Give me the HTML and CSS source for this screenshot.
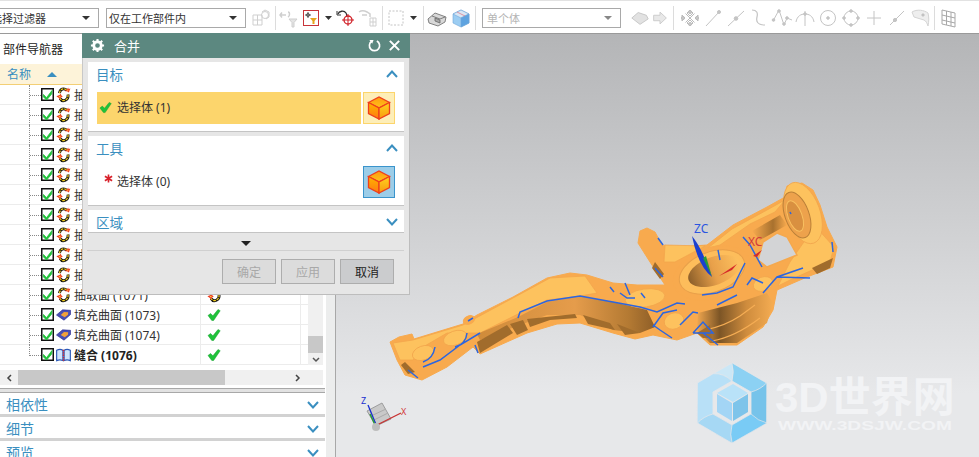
FILE: index.html
```html
<!DOCTYPE html>
<html lang="zh-CN">
<head>
    <meta charset="UTF-8">
    <title>合并</title>
    <link rel="stylesheet" href="styles.css">
</head>
<body>
    <svg class="defs" width="0" height="0">
        <symbol id="i-check" viewBox="0 0 13 13">
            <rect x="0.75" y="0.75" width="11.5" height="11.5" fill="#fff" stroke="#111" stroke-width="1.5"/>
            <path d="M2.5 6.5l3 3.2 5.5-7.2-.4 3.6-5 6-3.400-3.400z" fill="#1fc23a" stroke="#1fc23a" stroke-width=".8"/>
        </symbol>
        <symbol id="i-tick" viewBox="0 0 14 14">
            <path d="M1 7.5l2.6-2 2.3 2.3L11 1.5l2.2 1.2-6.6 9.8h-1.8z" fill="#1fc23a" stroke="#17a02e" stroke-width=".5"/>
        </symbol>
        <symbol id="i-extract" viewBox="0 0 16 18">
            <path d="M11.500 3.500C8.500 .8 4 2 3.500 7M13 8.500c1.200 6-6 9.500-8.800 4.500" fill="none" stroke="#111" stroke-width="3.200"/>
            <path d="M11.500 3.500C8.500 .8 4 2 3.500 7M13 8.500c1.200 6-6 9.500-8.800 4.500" fill="none" stroke="#f6d21f" stroke-width="1.400" stroke-dasharray="3 1"/>
            <path d="M0 10.500l3.500-1.400 1.500-1.600.6 2 1.600.8-2.200 1.800-1.200 2-1-1.800zM9.500 4.500l2.500-2 1.200-2 .6 1.700 2-.5-1 2.200-.7 2.300-1.700-1.200z" fill="#ee3a20"/>
            <path d="M2.500 10.500l2-.6.300 1-1 1zM12 3.500l1.300-.7.200 1.300-.8.500z" fill="#fbd13a"/>
        </symbol>
        <symbol id="i-fill" viewBox="0 0 16 14">
            <path d="M0.500 7L7 1.500l8.500.5v4.500L8.500 12.500z" fill="#4a4fb5" stroke="#2f3290" stroke-width=".7"/>
            <path d="M5 7l3.500-3.200 4.500.3-.2 2.500-3.500 2.700z" fill="#f2a23a"/>
        </symbol>
        <symbol id="i-seam" viewBox="0 0 16 14">
            <path d="M.7 2C3 .8 5.500.8 7.300 2v11c-1.800-1-4.300-1-6.600 0zM8.700 2c1.800-1.200 4.300-1.200 6.600 0v11c-2.300-1-4.800-1-6.600 0z" fill="#cfe4fa" stroke="#2a58b8" stroke-width="1.200"/>
            <path d="M8 1.500v11.500" stroke="#e02626" stroke-width="1.500" stroke-dasharray="1.500 1"/>
        </symbol>
        <symbol id="i-cube" viewBox="0 0 24 24">
            <defs>
                <linearGradient id="cube-top" x1="0" y1="0" x2="0" y2="1"><stop offset="0" stop-color="#ff9a10"/><stop offset="1" stop-color="#ffc21a"/></linearGradient>
                <linearGradient id="cube-left" x1="0" y1="0" x2="0" y2="1"><stop offset="0" stop-color="#ffb400"/><stop offset="1" stop-color="#ff7a10"/></linearGradient>
                <linearGradient id="cube-right" x1="0" y1="0" x2="0" y2="1"><stop offset="0" stop-color="#ffd21e"/><stop offset="1" stop-color="#f89a10"/></linearGradient>
            </defs>
            <path d="M1.500 6.500L12 1l10.500 5.500L12 12z" fill="url(#cube-top)" stroke="#ee3f1c" stroke-width="1.300"/>
            <path d="M1.500 6.500L12 12v11L1.500 17.500z" fill="url(#cube-left)" stroke="#ee3f1c" stroke-width="1.300"/>
            <path d="M22.500 6.500L12 12v11l10.500-5.500z" fill="url(#cube-right)" stroke="#ee3f1c" stroke-width="1.300"/>
        </symbol>
        <symbol id="i-chev-down" viewBox="0 0 12 8">
            <path d="M1 1l5 5.500L11 1" fill="none" stroke="#3a8fc0" stroke-width="2"/>
        </symbol>
        <symbol id="i-chev-up" viewBox="0 0 12 8">
            <path d="M1 7l5-5.500L11 7" fill="none" stroke="#3a8fc0" stroke-width="2"/>
        </symbol>
    </svg>

    <div class="toolbar">
        <div class="combo combo-filter"><span>选择过滤器</span><i class="combo-arrow"></i></div>
        <div class="combo combo-scope"><span>仅在工作部件内</span><i class="combo-arrow"></i></div>

        <div class="tool-group first-group">
            <svg class="tool" viewBox="0 0 22 22" fill="none" stroke="#cfcfcf"><path d="M3 8h9v10H3zM3 13h9M7.500 8v10"/><circle cx="15" cy="8" r="3.500"/><path d="M12 5l3-2 4 2v5l-3 2"/></svg>
        </div>
        <i class="sep"></i>
        <div class="tool-group">
            <svg class="tool" viewBox="0 0 22 22" fill="none" stroke="#cfcfcf" stroke-width="1.500"><path d="M2 8h6M4 5.500L2 8l2 2.500M10 5c2 0 2 4 0 5"/><path d="M11 12h8l-3 3.500V20h-2v-4.500z" stroke-width="1" fill="#e4e4e4"/></svg>
            <svg class="tool" viewBox="0 0 22 22" fill="none"><rect x="3.500" y="3.500" width="15" height="15" stroke="#c8343a"/><path d="M8 5v6M5 8h6" stroke="#555"/><circle cx="8" cy="8" r="1.500" stroke="#555"/><path d="M10 11h7l-2.500 3v3h-2v-3z" fill="#e8a41c"/></svg>
            <i class="caret"></i>
            <svg class="tool" viewBox="0 0 22 22" fill="none"><path d="M3 7c1-3 6-4 8-1 .6 1 .8 2 .8 3" stroke="#333" stroke-width="1.300"/><path d="M2 4v4h4" stroke="#333"/><circle cx="13" cy="13" r="4" stroke="#d01f26" stroke-width="1.300"/><path d="M13 7v12M7 13h12" stroke="#d01f26"/></svg>
            <svg class="tool" viewBox="0 0 22 22" fill="none" stroke="#cfcfcf"><path d="M2 5c3-2 6-1 8 0l3 2v3M5 8h5" stroke-width="1.500"/><path d="M13 11h6v8h-6zM16 11v8M13 15h6"/></svg>
        </div>
        <i class="sep"></i>
        <div class="tool-group">
            <svg class="tool" viewBox="0 0 22 22" fill="none" stroke="#c4c4c4" stroke-dasharray="2 1.500"><rect x="4" y="4" width="14" height="14"/></svg>
            <i class="caret"></i>
        </div>
        <i class="sep"></i>
        <div class="tool-group pair">
            <svg class="tool" viewBox="0 0 22 22" stroke="#666" stroke-width=".8"><path d="M2 12l7-6 11 4-1 5-7 4-9-3z" fill="#d8d8d8"/><path d="M6 9l8 3 5-2" fill="none"/><path d="M9 11l5 2v3l-5-2z" fill="#a8a8a8"/></svg>
            <svg class="tool" viewBox="0 0 22 22" stroke="#6fa6d8" stroke-width=".6"><path d="M11 3l8 4v9l-8 4-8-4V7z" fill="#9ccdf2"/><path d="M3 7l8 4 8-4-8-4z" fill="#d8e6f4"/><path d="M11 11v9l8-4V7z" fill="#5ea3e0"/><path d="M7 5l8 4" stroke="#e05a6a"/></svg>
        </div>
        <i class="sep"></i>
        <div class="combo combo-body"><span>单个体</span><i class="combo-arrow"></i></div>

        <div class="tool-group narrow-group">
            <svg class="tool" viewBox="0 0 22 22" fill="#e2e2e2" stroke="#c4c4c4"><path d="M2 11l7-6 9 3 2 4-9 6z"/></svg>
            <svg class="tool" viewBox="0 0 22 22" fill="#e8e8e8" stroke="#cacaca"><path d="M4 8h7V4.500L18 11l-7 6.500V14H4z"/></svg>
        </div>
        <i class="sep"></i>
        <div class="tool-group snap-group">
            <svg class="tool" viewBox="0 0 22 22" fill="#ccc" stroke="#bbb"><path d="M11 3l3 3-3 3-3-3zM11 13l3 3-3 3-3-3zM3 8l3 3-3 3zM19 8l-3 3 3 3zM6.500 6.500l9 9M15.500 6.500l-9 9" fill="none"/><circle cx="11" cy="5" r="1.500"/><circle cx="11" cy="17" r="1.500"/><circle cx="4" cy="11" r="1.500"/><circle cx="18" cy="11" r="1.500"/></svg>
            <svg class="tool" viewBox="0 0 22 22" stroke="#c4c4c4" fill="#c4c4c4"><path d="M4 19L17 5"/><circle cx="17" cy="5" r="1.500"/></svg>
            <svg class="tool" viewBox="0 0 22 22" stroke="#c4c4c4" fill="#c4c4c4"><path d="M3 19L19 4"/><circle cx="11" cy="11.500" r="1.800"/></svg>
            <svg class="tool" viewBox="0 0 22 22" stroke="#c4c4c4" fill="none" stroke-width="1.200"><path d="M4 3c5 0 6 3 5 7s0 8 8 8"/></svg>
            <svg class="tool" viewBox="0 0 22 22" stroke="#c4c4c4" fill="#c4c4c4"><path d="M2 14L8 3l5 15 3-7 5 2" fill="none"/><circle cx="2.500" cy="13" r="1.300"/><circle cx="8" cy="4" r="1.300"/><circle cx="13" cy="17" r="1.300"/><circle cx="16" cy="11" r="1.300"/></svg>
            <svg class="tool" viewBox="0 0 22 22" stroke="#c4c4c4" fill="none"><path d="M11 4v15M2 15c1-6 5-8 9-8s8 2 9 8"/><circle cx="11" cy="7" r="1.300" fill="#c4c4c4"/></svg>
            <svg class="tool" viewBox="0 0 22 22" stroke="#c4c4c4" fill="none"><circle cx="11" cy="11" r="7.500"/><circle cx="11" cy="11" r="1.300" fill="#c4c4c4"/></svg>
            <svg class="tool" viewBox="0 0 22 22" stroke="#c4c4c4" fill="#c4c4c4"><circle cx="11" cy="11" r="7" fill="none"/><circle cx="11" cy="4" r="1.300"/><circle cx="11" cy="18" r="1.300"/><circle cx="4" cy="11" r="1.300"/><circle cx="18" cy="11" r="1.300"/></svg>
            <svg class="tool" viewBox="0 0 22 22" stroke="#c4c4c4"><path d="M11 4v14M4 11h14"/></svg>
            <svg class="tool" viewBox="0 0 22 22" stroke="#c4c4c4" fill="#c4c4c4"><path d="M4 18L18 4"/><circle cx="9" cy="13" r="1.600"/></svg>
            <svg class="tool" viewBox="0 0 22 22" stroke="#d4d4d4" fill="#eee"><path d="M3 5c5-3 12-2 16 1 1 4 1 8 0 13-1-3-2-5-4-6-3-1-7-2-10-3z"/><circle cx="14" cy="8" r="1.300" fill="#aaa"/></svg>
        </div>
        <i class="sep"></i>
        <svg class="tool" viewBox="0 0 22 22" fill="none" stroke="#a8a8a8"><path d="M5 3l13 3v14l-13-3zM5 8l13 3M5 13l13 3M9.500 4v14M14 5v14"/></svg>
    </div>

    <div class="main">
        <div class="side">
            <div class="nav-title">部件导航器</div>
            <div class="tree-head"><span>名称</span><i class="sort-arrow"></i></div>
            <div class="tree-body">
                <div class="tree-rows">
                    <div class="row"><div class="cell-name"><i class="stub"></i><svg class="ico-check"><use href="#i-check"/></svg><svg class="ico"><use href="#i-extract"/></svg><span>抽取面 (1051)</span></div><div class="cell-status"><svg class="ico"><use href="#i-extract"/></svg></div></div>
                    <div class="row"><div class="cell-name"><i class="stub"></i><svg class="ico-check"><use href="#i-check"/></svg><svg class="ico"><use href="#i-extract"/></svg><span>抽取面 (1053)</span></div><div class="cell-status"><svg class="ico"><use href="#i-extract"/></svg></div></div>
                    <div class="row"><div class="cell-name"><i class="stub"></i><svg class="ico-check"><use href="#i-check"/></svg><svg class="ico"><use href="#i-extract"/></svg><span>抽取面 (1055)</span></div><div class="cell-status"><svg class="ico"><use href="#i-extract"/></svg></div></div>
                    <div class="row"><div class="cell-name"><i class="stub"></i><svg class="ico-check"><use href="#i-check"/></svg><svg class="ico"><use href="#i-extract"/></svg><span>抽取面 (1057)</span></div><div class="cell-status"><svg class="ico"><use href="#i-extract"/></svg></div></div>
                    <div class="row"><div class="cell-name"><i class="stub"></i><svg class="ico-check"><use href="#i-check"/></svg><svg class="ico"><use href="#i-extract"/></svg><span>抽取面 (1059)</span></div><div class="cell-status"><svg class="ico"><use href="#i-extract"/></svg></div></div>
                    <div class="row"><div class="cell-name"><i class="stub"></i><svg class="ico-check"><use href="#i-check"/></svg><svg class="ico"><use href="#i-extract"/></svg><span>抽取面 (1061)</span></div><div class="cell-status"><svg class="ico"><use href="#i-extract"/></svg></div></div>
                    <div class="row"><div class="cell-name"><i class="stub"></i><svg class="ico-check"><use href="#i-check"/></svg><svg class="ico"><use href="#i-extract"/></svg><span>抽取面 (1063)</span></div><div class="cell-status"><svg class="ico"><use href="#i-extract"/></svg></div></div>
                    <div class="row"><div class="cell-name"><i class="stub"></i><svg class="ico-check"><use href="#i-check"/></svg><svg class="ico"><use href="#i-extract"/></svg><span>抽取面 (1065)</span></div><div class="cell-status"><svg class="ico"><use href="#i-extract"/></svg></div></div>
                    <div class="row"><div class="cell-name"><i class="stub"></i><svg class="ico-check"><use href="#i-check"/></svg><svg class="ico"><use href="#i-extract"/></svg><span>抽取面 (1067)</span></div><div class="cell-status"><svg class="ico"><use href="#i-extract"/></svg></div></div>
                    <div class="row"><div class="cell-name"><i class="stub"></i><svg class="ico-check"><use href="#i-check"/></svg><svg class="ico"><use href="#i-extract"/></svg><span>抽取面 (1069)</span></div><div class="cell-status"><svg class="ico"><use href="#i-extract"/></svg></div></div>
                    <div class="row"><div class="cell-name"><i class="stub"></i><svg class="ico-check"><use href="#i-check"/></svg><svg class="ico"><use href="#i-extract"/></svg><span>抽取面 (1071)</span></div><div class="cell-status"><svg class="ico"><use href="#i-extract"/></svg></div></div>
                    <div class="row"><div class="cell-name"><i class="stub"></i><svg class="ico-check"><use href="#i-check"/></svg><svg class="ico"><use href="#i-fill"/></svg><span>填充曲面 (1073)</span></div><div class="cell-status"><svg class="ico-tick"><use href="#i-tick"/></svg></div></div>
                    <div class="row"><div class="cell-name"><i class="stub"></i><svg class="ico-check"><use href="#i-check"/></svg><svg class="ico"><use href="#i-fill"/></svg><span>填充曲面 (1074)</span></div><div class="cell-status"><svg class="ico-tick"><use href="#i-tick"/></svg></div></div>
                    <div class="row"><div class="cell-name"><i class="stub stub-last"></i><svg class="ico-check"><use href="#i-check"/></svg><svg class="ico"><use href="#i-seam"/></svg><span class="row-bold">缝合 (1076)</span></div><div class="cell-status"><svg class="ico-tick"><use href="#i-tick"/></svg></div></div>
                </div>
                <div class="vscroll">
                    <div class="vthumb"></div>
                    <svg class="scroll-btn" viewBox="0 0 8 6"><path d="M1 1l3 3 3-3" fill="none" stroke="#555" stroke-width="1.500"/></svg>
                </div>
            </div>
            <div class="hscroll">
                <svg class="scroll-arrow" viewBox="0 0 6 8"><path d="M5 1L2 4l3 3" fill="none" stroke="#444" stroke-width="1.500"/></svg>
                <div class="hthumb"></div>
                <svg class="scroll-arrow" viewBox="0 0 6 8"><path d="M1 1l3 3-3 3" fill="none" stroke="#444" stroke-width="1.500"/></svg>
            </div>
            <div class="grip"></div>
            <div class="nav-section"><span>相依性</span><svg class="chev"><use href="#i-chev-down"/></svg></div>
            <div class="nav-section"><span>细节</span><svg class="chev"><use href="#i-chev-down"/></svg></div>
            <div class="nav-section"><span>预览</span><svg class="chev"><use href="#i-chev-down"/></svg></div>
        </div>

        <div class="viewport">
            <svg class="scene" width="643" height="423" viewBox="336 34 643 423">
                <defs>
                    <linearGradient id="side-face" x1="0" y1="0" x2="1" y2="0">
                        <stop offset="0" stop-color="#cf8b3a"/><stop offset=".55" stop-color="#e59c4b"/><stop offset=".85" stop-color="#b47a33"/><stop offset="1" stop-color="#8f5f28"/>
                    </linearGradient>
                    <linearGradient id="drum" x1="0" y1="0" x2="1" y2="0">
                        <stop offset="0" stop-color="#f0a64e"/><stop offset=".3" stop-color="#7c5526"/><stop offset=".65" stop-color="#cf8c3d"/><stop offset="1" stop-color="#f4ac52"/>
                    </linearGradient>
                    <linearGradient id="bore" x1="0" y1="0" x2="1" y2="0">
                        <stop offset="0" stop-color="#8c5f2a"/><stop offset=".5" stop-color="#e8a04a"/><stop offset="1" stop-color="#fdc05e"/>
                    </linearGradient>
                    <linearGradient id="strut" x1="0" y1="0" x2="1" y2="0">
                        <stop offset="0" stop-color="#f8aa4e"/><stop offset=".6" stop-color="#a8712e"/><stop offset="1" stop-color="#f8aa4e"/>
                    </linearGradient>
                </defs>

                <!-- part body -->
                <path class="part-base" d="M390 342L399 337 412 334 414 339 463 324 477 315 513 297 547 278 570 273 587 275 613 283 637 285 655 285 665 285 650 262 638 243 640 231 647 228 655 232 662 245 680 247 707 245 733 225 767 207 785 197 787 186 802 183 813 190 820 205 827 227 837 247 833 267 807 277 777 290 773 310 763 327 737 345 710 345 697 333 677 340 653 335 635 339 613 333 580 323 557 324 527 333 480 354 473 347 447 367 422 380 405 375 397 360z"/>
                <path class="part-light" d="M393 343L413 340 463 325 513 298 550 278 585 276 597 293 580 296 547 300 520 313 480 333 447 333 423 347 413 360 400 360z"/>
                <path d="M518 317L547 302 580 296 613 302 647 310 655 327 640 333 613 330 580 315 547 315 480 340 477 334z" fill="url(#side-face)"/>
                <path class="part-dark" d="M477 342L507 325 513 333 480 353zM510 324L523 320 528 330 517 335zM527 319L575 314 577 318 550 320 530 327zM583 315L610 323 615 330 588 324zM617 324L640 333 625 335zM405 362L415 372 408 374 401 365z"/>
                <ellipse class="part-light" cx="455" cy="338" rx="12" ry="7" transform="rotate(-20 455 338)"/>
                <ellipse class="part-light" cx="423" cy="353" rx="11" ry="7" transform="rotate(-20 423 353)"/>
                <ellipse class="part-base" cx="469" cy="320" rx="6" ry="4" transform="rotate(-25 469 320)"/>

                <path class="part-light" d="M665 245L705 246 675 262 664 262zM732 229L767 210 785 200 775 212 750 224 720 245 708 248zM815 226L834 247 830 262 790 280 778 286 790 262z"/>
                <path d="M752 231L780 215 787 225 760 240z" fill="url(#strut)"/>
                <path d="M763 242L777 233 787 237 797 255 767 267 758 260z" fill="#d3d4d6" stroke="#f5a84d" stroke-width="1.500"/>
                <ellipse class="part-light" cx="803" cy="213" rx="17" ry="32" transform="rotate(-20 803 213)"/>
                <ellipse cx="797" cy="215" rx="12" ry="24" transform="rotate(-20 797 215)" fill="#eda24c" stroke="#b97f38"/>
                <ellipse cx="795" cy="216" rx="7" ry="16" transform="rotate(-20 795 216)" fill="#d99040" stroke="#f8c060"/>
                <path class="part-dark" d="M812 268L833 258 830 268 817 274z"/>
                <path d="M698 313L737 303 767 293 773 303 767 323 737 343 710 343 697 330z" fill="url(#drum)"/>
                <path d="M705 330Q725 326 740 316L755 305M712 341Q735 337 760 318" fill="none" stroke="#f5ad54" stroke-width="1.200"/>
                <ellipse class="part-base" cx="712" cy="273" rx="40" ry="25" transform="rotate(-20 712 273)"/>
                <ellipse cx="712" cy="272" rx="34" ry="20" transform="rotate(-20 712 272)" fill="#fdbd5b" stroke="#e8a04a"/>
                <ellipse cx="714" cy="271" rx="27" ry="14" transform="rotate(-20 714 271)" fill="url(#bore)"/>
                <ellipse class="part-light" cx="763" cy="284" rx="10" ry="7" transform="rotate(-20 763 284)"/>
                <ellipse class="part-light" cx="674" cy="321" rx="10" ry="8" transform="rotate(-20 674 321)"/>
                <ellipse class="part-light" cx="645" cy="298" rx="20" ry="9" transform="rotate(-8 645 298)"/>
                <path class="part-dark" d="M655 262L664 274 660 279 652 268zM697 333L710 325 712 338 703 338z"/>

                <!-- edge curves -->
                <g class="edges">
                    <path d="M518 318L520 312 547 301 580 296 613 302 640 307 657 312 677 303 685 304"/>
                    <path d="M423 367L440 360 460 345 480 333M423 362Q433 359 435 347M455 347Q466 344 467 333M468 321L473 318M475 345L478 353M408 370L418 378"/>
                    <path d="M610 287L614 292M620 293L627 298 635 298M625 283L630 295M641 293L645 298"/>
                    <path d="M653 327L663 313 677 310M653 325L660 330 672 338M680 325L693 312 698 313"/>
                    <path d="M702 295L717 293 733 287 745 263M717 305L737 295M747 285L752 278 763 283M763 293L777 277 803 268M777 277L810 278"/>
                    <path d="M693 333L703 322 713 333 693 333M703 333L718 345"/>
                    <path d="M743 237L750 245 762 267M718 250L720 260M655 268L663 277M658 238L663 245M832 242L833 252M790 212L791 214"/>
                </g>

                <!-- work triad -->
                <path d="M692 236Q702 248 712 277 698 266 692 236z" fill="#1a3fd0"/>
                <path d="M712 277L703 258 706 256z" fill="#2a9a3a"/>
                <path d="M719 276L737 264 732 270z" fill="#d62a2a"/>
                <path d="M753 256L762 250 757 257z" fill="#d62a2a"/>
                <text class="axis-label axis-blue" x="694" y="233">ZC</text>
                <text class="axis-label axis-red" x="748" y="246">XC</text>

                <!-- orientation triad -->
                <path d="M367 411L382 403 391 419 376 426z" fill="#c9c9c9" stroke="#9d9d9d"/>
                <path d="M371 416L386 409M374 420L388 413" stroke="#aaa" fill="none"/>
                <path d="M377 427L368 405" stroke="#1a2fd0" stroke-width="1.300"/>
                <path d="M376 427L370 414" stroke="#2a9a3a" stroke-width="1.500"/>
                <path d="M377 425L401 413" stroke="#c83030" stroke-width="1.300"/>
                <circle cx="376" cy="427" r="4" fill="#bdbdbd"/>
                <text class="mini-label mini-blue" x="361" y="404">Z</text>
                <text class="mini-label mini-red" x="401" y="415">X</text>

                <!-- watermark -->
                <g transform="translate(732 403)" stroke="#e6e7e9" stroke-width=".7">
                    <path d="M-35-20L0-40 16-31Q22-22 19-11L0-22-19-11Q-26-18-35-20z" fill="#cbe7f6"/>
                    <path d="M-35-20L0-40 16-31Q22-22 19-11L0-22-19-11Q-26-18-35-20z" transform="rotate(60)" fill="#8cd1f3"/>
                    <path d="M-35-20L0-40 16-31Q22-22 19-11L0-22-19-11Q-26-18-35-20z" transform="rotate(120)" fill="#76c3ea"/>
                    <path d="M-35-20L0-40 16-31Q22-22 19-11L0-22-19-11Q-26-18-35-20z" transform="rotate(180)" fill="#79cbf5"/>
                    <path d="M-35-20L0-40 16-31Q22-22 19-11L0-22-19-11Q-26-18-35-20z" transform="rotate(240)" fill="#a6d8f4"/>
                    <path d="M-35-20L0-40 16-31Q22-22 19-11L0-22-19-11Q-26-18-35-20z" transform="rotate(300)" fill="#b8e0f7"/>
                    <path d="M1-19L16-10 1-1-15-10z" fill="#b9e2f8" stroke="none"/>
                    <path d="M-15-9L0 0V18L-15 9z" fill="#a3d5f5" stroke="none"/>
                    <path d="M16-9L1 0V18L16 9z" fill="#7ec4ea" stroke="none"/>
                </g>
                <text class="wm-title" x="775" y="412">3D世界网</text>
                <text class="wm-url" x="778" y="430" textLength="174" lengthAdjust="spacingAndGlyphs">WWW.3DSJW.COM</text>
            </svg>
        </div>
    </div>

    <div class="dialog">
        <div class="dialog-title">
            <svg class="gear" viewBox="0 0 16 16"><circle cx="8" cy="8" r="4" fill="none" stroke="#fff" stroke-width="3"/><path d="M8 1v3M8 12v3M1 8h3M12 8h3M3 3l2 2M11 11l2 2M13 3l-2 2M5 11l-2 2" stroke="#fff" stroke-width="2.200"/></svg>
            <span class="dialog-name">合并</span>
            <svg class="title-btn" viewBox="0 0 14 14"><path d="M4 2.500A5.500 5.500 0 1 0 9.500 2.200" fill="none" stroke="#fff" stroke-width="1.800"/><path d="M1.500 1l4.500 .2-1.500 4z" fill="#fff"/></svg>
            <svg class="title-btn" viewBox="0 0 14 14"><path d="M2 2l10 10M12 2L2 12" stroke="#fff" stroke-width="2.200"/></svg>
        </div>
        <div class="dialog-body">
            <section class="panel panel-target">
                <div class="panel-head"><span>目标</span><svg class="chev"><use href="#i-chev-up"/></svg></div>
                <div class="pick-row">
                    <div class="pick-label pick-active"><svg class="pick-mark"><use href="#i-tick"/></svg><span>选择体 (1)</span></div>
                    <div class="pick-btn pick-btn-yellow"><svg class="pick-cube"><use href="#i-cube"/></svg></div>
                </div>
            </section>
            <section class="panel panel-tool">
                <div class="panel-head"><span>工具</span><svg class="chev"><use href="#i-chev-up"/></svg></div>
                <div class="pick-row">
                    <div class="pick-label">
                        <svg class="star" viewBox="0 0 10 10"><path d="M5 .5v9M1 2.500l8 5M9 2.500l-8 5" stroke="#d8202a" stroke-width="1.800"/></svg>
                        <span>选择体 (0)</span>
                    </div>
                    <div class="pick-btn pick-btn-blue"><svg class="pick-cube"><use href="#i-cube"/></svg></div>
                </div>
            </section>
            <section class="panel panel-region">
                <div class="panel-head"><span>区域</span><svg class="chev"><use href="#i-chev-down"/></svg></div>
            </section>
            <div class="more"><i class="more-arrow"></i></div>
            <div class="dialog-actions">
                <button class="btn" disabled>确定</button>
                <button class="btn" disabled>应用</button>
                <button class="btn btn-cancel">取消</button>
            </div>
        </div>
    </div>
</body>
</html>
```

FILE: styles.css
```css
* {
    box-sizing: border-box;
}

html, body {
    margin: 0;
    height: 457px;
    overflow: hidden;
}

body {
    position: relative;
    font-family: "Noto Sans", "Noto Sans CJK SC", sans-serif;
    font-size: 12px;
    color: #333;
    background-color: #fff;
}

.defs {
    display: block;
    height: 0;
}

i {
    display: block;
    font-style: normal;
}

/* top toolbar */
.toolbar {
    display: flex;
    align-items: center;
    height: 34px;
    padding-top: 2px;
    background-color: #fff;
    border-top: 1px solid #e2e2e2;
    border-bottom: 1px solid #9a9a9a;
}

.combo {
    display: flex;
    align-items: center;
    justify-content: space-between;
    flex-shrink: 0;
    height: 20px;
    padding: 0 8px 0 2px;
    font-size: 11px;
    background-color: #fff;
    border: 1px solid #a9a9a9;
}

.combo-filter {
    width: 120px;
    margin-left: -21px;
    padding-left: 11px;
}

.combo-scope {
    width: 140px;
    margin-left: 7px;
}

.combo-body {
    width: 139px;
    margin-left: 4px;
    padding-left: 4px;
    color: #b5b5b5;
}

.combo-arrow {
    width: 0;
    height: 0;
    border-left: 4px solid transparent;
    border-right: 4px solid transparent;
    border-top: 4px solid #333;
}

.combo-body .combo-arrow {
    border-top-color: #888;
}

.tool-group {
    display: flex;
    align-items: center;
}

.first-group {
    margin-left: 4px;
}

.narrow-group {
    margin-left: 9px;
}

.narrow-group .tool {
    width: 20px;
}

.snap-group {
    margin-left: 3px;
    gap: 1px;
}

.pair {
    gap: 2px;
}

.tool {
    display: block;
    flex-shrink: 0;
    width: 22px;
    height: 22px;
}

.caret {
    width: 13px;
    height: 4px;
    background-color: #333;
    clip-path: polygon(3px 0, 10px 0, 6.5px 4px);
}

.sep {
    flex-shrink: 0;
    width: 1px;
    height: 24px;
    margin: 0 2px 0 3px;
    background-color: #dcdcdc;
}

/* main area */
.main {
    display: flex;
    height: 423px;
}

.side {
    flex-shrink: 0;
    width: 336px;
    padding-right: 10px;
    background: linear-gradient(to right, #fff 326px, #eceded 326px);
    border-right: 1px solid #a8a8a8;
    overflow: hidden;
}

.nav-title {
    height: 30px;
    padding: 6px 0 0 3px;
    color: #222;
}

.tree-head {
    display: flex;
    align-items: center;
    gap: 16px;
    height: 21px;
    padding-left: 7px;
    color: #3a8fc0;
    background-color: #fdf3d9;
    border-bottom: 1px solid #f3cf75;
}

.sort-arrow {
    width: 0;
    height: 0;
    border-left: 5px solid transparent;
    border-right: 5px solid transparent;
    border-bottom: 5px solid #3a8fc0;
}

.tree-body {
    display: flex;
    height: 280px;
    margin-right: 2px;
}

.tree-rows {
    width: 308px;
}

.row {
    display: flex;
    height: 20px;
    border-bottom: 1px solid #ececec;
}

.cell-name {
    display: flex;
    align-items: center;
    width: 201px;
    padding-left: 29px;
    white-space: nowrap;
    border-right: 1px solid #ececec;
}

.cell-status {
    display: flex;
    align-items: center;
    width: 100px;
    padding-left: 6px;
    border-right: 1px solid #ececec;
}

.stub {
    flex-shrink: 0;
    align-self: flex-start;
    width: 12px;
    height: 20px;
    border-left: 1px dotted #888;
}

.stub::after {
    content: "";
    display: block;
    height: 10px;
    border-bottom: 1px dotted #888;
}

.stub-last {
    height: 11px;
}

.ico-check {
    flex-shrink: 0;
    width: 13px;
    height: 13px;
    margin-right: 2px;
}

.ico {
    flex-shrink: 0;
    width: 15px;
    height: 16px;
    margin-right: 3px;
}

.ico-tick {
    flex-shrink: 0;
    width: 14px;
    height: 14px;
}

.row-bold {
    font-weight: 700;
    color: #222;
}

.vscroll {
    display: flex;
    flex-direction: column;
    justify-content: flex-end;
    width: 15px;
    background-color: #f0f0f0;
}

.vthumb {
    height: 17px;
    margin-bottom: 4px;
    background-color: #c8c8c8;
}

.scroll-btn {
    width: 8px;
    height: 6px;
    margin: 0 auto 2px;
}

.hscroll {
    display: flex;
    align-items: center;
    height: 15px;
    margin: 5px 2px 0 0;
    padding: 0 22px 0 6px;
    background-color: #f0f0f0;
}

.scroll-arrow {
    flex-shrink: 0;
    width: 6px;
    height: 8px;
}

.hthumb {
    width: 208px;
    height: 15px;
    margin: 0 70px 0 6px;
    background-color: #c8c8c8;
}

.grip {
    height: 5px;
    margin-top: 3px;
    background-color: #e2e2e2;
    border-top: 1px solid #a8a8a8;
    border-bottom: 1px solid #a8a8a8;
}

.nav-section {
    display: flex;
    align-items: center;
    justify-content: space-between;
    height: 24px;
    padding: 3px 6px 0;
    font-size: 14px;
    line-height: 18px;
    color: #3a8fc0;
    background-color: #fff;
    border-bottom: 3px solid #d2d2d2;
}

.chev {
    flex-shrink: 0;
    width: 12px;
    height: 8px;
}

/* 3D view */
.viewport {
    flex: 1;
    background: linear-gradient(#b4b5b7, #cfd0d2 45%, #e7e8ea 85%);
}

.scene {
    display: block;
}

.part-base {
    fill: #f8aa4e;
    stroke: #f8aa4e;
    stroke-linejoin: round;
}

.part-light {
    fill: #fdc25e;
    stroke: #f2a64d;
    stroke-width: 0.8;
}

.part-dark {
    fill: #a16c2c;
}

.edges path {
    fill: none;
    stroke: #2c66e0;
    stroke-width: 1.5;
}

.axis-label {
    font-family: "Noto Sans", sans-serif;
    font-size: 12px;
}

.axis-blue {
    fill: #2a55e0;
}

.axis-red {
    fill: #d23a3a;
}

.mini-label {
    font-family: "Noto Sans", sans-serif;
    font-size: 9px;
}

.mini-blue {
    fill: #1a2fd0;
}

.mini-red {
    fill: #d23a3a;
}

.wm-title {
    font-family: "Liberation Sans", "Noto Sans CJK SC", sans-serif;
    font-size: 42px;
    font-weight: 700;
    fill: #f2f3f5;
}

.wm-url {
    font-family: "Liberation Sans", sans-serif;
    font-size: 12px;
    font-weight: 700;
    fill: #f2f3f5;
}

/* dialog */
.dialog {
    position: absolute;
    left: 82px;
    top: 33px;
    width: 328px;
    height: 262px;
    background-color: #e6e6e6;
    border-right: 1px solid #bdbdbd;
    border-bottom: 1px solid #bdbdbd;
    border-left: 1px solid #c8c8c8;
}

.dialog-title {
    display: flex;
    align-items: center;
    height: 25px;
    margin: 0 -1px;
    padding: 0 9px 0 8px;
    color: #fff;
    background-color: #5c8880;
}

.gear {
    width: 15px;
    height: 15px;
}

.dialog-name {
    flex: 1;
    margin-left: 9px;
    font-size: 13px;
}

.title-btn {
    width: 13px;
    height: 13px;
    margin-left: 7px;
}

.dialog-body {
    padding: 4px 5px 0;
}

.panel {
    background-color: #fff;
    border-bottom: 1px solid #c4c4c4;
    margin-bottom: 4px;
}

.panel-target,
.panel-tool {
    height: 70px;
}

.panel-region {
    height: 23px;
    margin-bottom: 0;
}

.panel-head {
    display: flex;
    align-items: center;
    justify-content: space-between;
    height: 26px;
    padding: 0 6px 2px 8px;
    font-size: 13.5px;
    color: #3a8fc0;
}

.panel-region .panel-head {
    height: 23px;
    padding-top: 3px;
}

.pick-row {
    display: flex;
    gap: 2px;
    padding: 4px 9px 0;
}

.pick-label {
    display: flex;
    align-items: center;
    width: 264px;
    height: 32px;
    padding: 0 0 2px 2px;
    color: #333;
}

.pick-active {
    background-color: #fcd56c;
}

.pick-mark {
    width: 13px;
    height: 13px;
    margin-right: 5px;
}

.star {
    flex-shrink: 0;
    width: 9px;
    height: 9px;
    margin: -5px 4px 0 5px;
}

.pick-btn {
    display: flex;
    align-items: center;
    justify-content: center;
    width: 32px;
    height: 32px;
    border: 1px solid;
}

.pick-btn-yellow {
    background-color: #fdeeb8;
    border-color: #fcd56c;
}

.pick-btn-blue {
    background-color: #9ccde8;
    border-color: #3a94cc;
}

.pick-cube {
    width: 24px;
    height: 24px;
}

.more {
    display: flex;
    justify-content: center;
    align-items: center;
    height: 18px;
    margin-left: -1px;
    padding-top: 3px;
    border-bottom: 1px solid #d0d0d0;
}

.more-arrow {
    width: 0;
    height: 0;
    border-left: 5px solid transparent;
    border-right: 5px solid transparent;
    border-top: 5px solid #222;
}

.dialog-actions {
    display: flex;
    justify-content: flex-end;
    gap: 5px;
    padding: 8px 10px 0 0;
}

.btn {
    width: 54px;
    height: 25px;
    padding: 0;
    font-family: inherit;
    font-size: 12px;
    color: #a8a8a8;
    background-color: #dcdcdc;
    border: 1px solid #adadad;
    border-radius: 0;
}

.btn-cancel {
    color: #222;
    background-color: #cbccce;
}
```
